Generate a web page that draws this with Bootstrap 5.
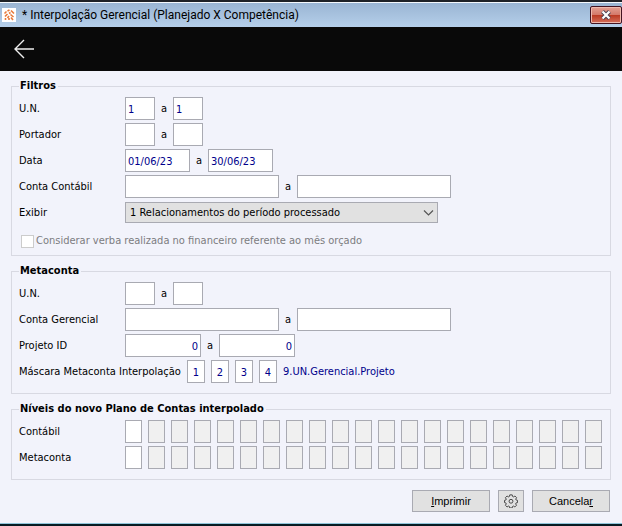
<!DOCTYPE html>
<html lang="pt-BR">
<head>
<meta charset="utf-8">
<meta name="viewport" content="width=device-width, initial-scale=1">
<title>Interpolação Gerencial</title>
<link href="https://cdn.jsdelivr.net/npm/bootstrap@5.3.0/dist/css/bootstrap.min.css" rel="stylesheet">
<style>
body{font-family:"DejaVu Sans Condensed","Noto Sans",sans-serif;font-size:11px;line-height:14px;color:#000;background:#f2f3fb}
.window{border-top:2px solid #1e2126;border-bottom:2px solid #061b22}
.inner{border-top:1px solid #f4f8fc;border-bottom:1px solid #8fc3d8}
.titlebar{height:24px;gap:6px;background:linear-gradient(#9ab5d3,#b5cfea);padding-left:2px}
.titlebar h1{font-family:Roboto,sans-serif;font-size:12px;line-height:16px}
.appicon{width:14px;height:14px;background:#fff}
.closebtn{width:32px;height:18px;border:1px solid #431422;border-radius:2px;background:linear-gradient(#e3a093,#d4796a 48%,#bb3a23 52%,#d4705c);box-shadow:inset 0 0 0 1px #eeb9ae}
.toolbar{height:44px;background:#090909;padding-left:14px}
.content{padding:8px 11px 11px}
.group{border:1px solid #d8d9e2;padding:4px 8px 7px 7px}
.group legend{font-size:11px;line-height:14px;font-weight:700;padding:0 2px 0 1px}
.line{min-height:23px;margin-bottom:3px}
.line label,.sep,.navy{line-height:14px;padding-top:1px}
.cap{width:106px}
.cap-long{width:162px}
.field{height:23px;border:1px solid #a9aab2;border-radius:0;background:#fff;color:#00008b;font-size:11px;line-height:14px;padding:1px 2px 0}
.field:disabled{background:#f0f0f0}
.w-s{width:30px}
.w-date{width:65px}
.w-acc{width:154px}
.w-id{width:76px}
.w-c{width:18px}
.sep{width:18px}
.pick{width:313px;height:21px;background-color:#e1e1e1;background-position:right 3px center;background-size:11px 11px;border:1px solid #a9aab2;font-size:11px;line-height:14px;padding:0 20px 0 4px;color:#000;background-image:url("data:image/svg+xml,%3csvg xmlns='http://www.w3.org/2000/svg' viewBox='0 0 11 11'%3e%3cpath fill='none' stroke='%23555' stroke-width='1.200' d='M1 3.500l4.500 4.500L10 3.500'/%3e%3c/svg%3e")}
.tick{width:13px;height:13px;border:1px solid #ccc;background:#fff}
.mask{gap:6px}
.check{min-height:21px;padding-left:2px;gap:2px;color:#7c7c80}
.navy{color:#00008b}
.cells{gap:6px}
.cell{min-width:0}
.cmds{gap:8px;margin-top:10px;padding-right:1px}
.cmd{height:22px;border:1px solid #a9aab2;border-radius:0;background:#e1e1e1;color:#000;font-family:"Liberation Sans",sans-serif;font-size:11px;line-height:14px;width:78px}
.cmd-icon{width:26px}
</style>
</head>
<body>
<div class="window"><div class="inner">
<header>
<div class="titlebar d-flex align-items-center">
<svg class="appicon" viewBox="0 0 14 14" aria-hidden="true"><path d="M2.500 5.500l2-2M5.500 3l2-1M9 2.500l3 3M3 8.500l2.500-2.500M7 5.500l1.500-1M8.500 6.500l3 2.500M3.500 12v-2M5.500 10l1.500-2M7 12v-2M9 9.500l2 2.500" stroke="#e87a3c" stroke-width="1.600" fill="none"/></svg>
<h1 class="m-0 fw-normal">* Interpolação Gerencial (Planejado X Competência)</h1>
<button type="button" class="closebtn ms-auto p-0 d-flex align-items-center justify-content-center" aria-label="Fechar"><svg width="12" height="10" viewBox="0 0 12 10"><path d="M2.500 1.500l7 7M9.500 1.500l-7 7" stroke="#4a4455" stroke-width="4"/><path d="M2.500 1.500l7 7M9.500 1.500l-7 7" stroke="#fff" stroke-width="2.200"/></svg></button>
</div>
<div class="toolbar d-flex align-items-center">
<button type="button" class="btn p-0 border-0 d-flex" aria-label="Voltar"><svg width="20" height="20" viewBox="0 0 20 20" fill="none" stroke="#eee" stroke-width="1.400"><path d="M20 10H1M10 1L1 10l9 9"/></svg></button>
</div>
</header>
<form class="content">
<fieldset class="group mb-2">
<legend class="float-none w-auto mb-0">Filtros</legend>
<div class="line d-flex align-items-center"><label class="cap" for="un1">U.N.</label><input class="field w-s" id="un1" value="1"><span class="sep text-center">a</span><input class="field w-s" value="1" aria-label="U.N. final"></div>
<div class="line d-flex align-items-center"><label class="cap" for="po1">Portador</label><input class="field w-s" id="po1"><span class="sep text-center">a</span><input class="field w-s" aria-label="Portador final"></div>
<div class="line d-flex align-items-center"><label class="cap" for="da1">Data</label><input class="field w-date" id="da1" value="01/06/23"><span class="sep text-center">a</span><input class="field w-date" value="30/06/23" aria-label="Data final"></div>
<div class="line d-flex align-items-center"><label class="cap" for="cc1">Conta Contábil</label><input class="field w-acc" id="cc1"><span class="sep text-center">a</span><input class="field w-acc" aria-label="Conta Contábil final"></div>
<div class="line d-flex align-items-center"><label class="cap" for="ex">Exibir</label><select class="form-select pick rounded-0" id="ex"><option>1 Relacionamentos do período processado</option></select></div>
<div class="check d-flex align-items-end"><input type="checkbox" class="tick form-check-input m-0 rounded-0 opacity-100" id="cv" disabled><label class="opacity-100" for="cv">Considerar verba realizada no financeiro referente ao mês orçado</label></div>
</fieldset>
<fieldset class="group mb-2">
<legend class="float-none w-auto mb-0">Metaconta</legend>
<div class="line d-flex align-items-center"><label class="cap" for="mu1">U.N.</label><input class="field w-s" id="mu1"><span class="sep text-center">a</span><input class="field w-s" aria-label="U.N. final"></div>
<div class="line d-flex align-items-center"><label class="cap" for="cg1">Conta Gerencial</label><input class="field w-acc" id="cg1"><span class="sep text-center">a</span><input class="field w-acc" aria-label="Conta Gerencial final"></div>
<div class="line d-flex align-items-center"><label class="cap" for="pj1">Projeto ID</label><input class="field w-id text-end" id="pj1" value="0"><span class="sep text-center">a</span><input class="field w-id text-end" value="0" aria-label="Projeto ID final"></div>
<div class="line mask d-flex align-items-center"><label class="cap-long text-nowrap" for="m1">Máscara Metaconta Interpolação</label><input class="field w-c text-center" id="m1" value="1"><input class="field w-c text-center" value="2" aria-label="Máscara 2"><input class="field w-c text-center" value="3" aria-label="Máscara 3"><input class="field w-c text-center" value="4" aria-label="Máscara 4"><span class="navy">9.UN.Gerencial.Projeto</span></div>
</fieldset>
<fieldset class="group">
<legend class="float-none w-auto mb-0">Níveis do novo Plano de Contas interpolado</legend>
<div class="line d-flex align-items-center"><label class="cap flex-shrink-0" for="n1">Contábil</label><div class="cells d-flex flex-fill" id="r1"><input class="field cell w-100" id="n1"></div></div>
<div class="line d-flex align-items-center"><label class="cap flex-shrink-0" for="n2">Metaconta</label><div class="cells d-flex flex-fill" id="r2"><input class="field cell w-100" id="n2"></div></div>
</fieldset>
<div class="cmds d-flex justify-content-end">
<button type="button" class="cmd p-0"><u>I</u>mprimir</button>
<button type="button" class="cmd cmd-icon p-0 d-flex align-items-center justify-content-center" aria-label="Configurar"><svg width="14" height="14" viewBox="0 0 16 16" fill="none" stroke="#444" stroke-width="1.100" stroke-linejoin="round"><path d="M6.600 1h2.800l.4 1.800 1.100.5 1.600-1 1.900 1.900-1 1.600.5 1.100 1.600.4v2.500l-1.700.4-.5 1.100 1 1.600-1.900 1.900-1.600-1-1.100.5-.4 1.700H6.600l-.4-1.700-1.100-.5-1.600 1-1.900-1.900 1-1.600-.5-1.100L.6 9.800V7.300l1.500-.4.5-1.100-1-1.600 1.900-1.900 1.600 1 1.100-.5z"/><circle cx="8" cy="8.300" r="2.200"/></svg></button>
<button type="button" class="cmd p-0">Cancela<u>r</u></button>
</div>
</form>
</div></div>
<script>
for (const id of ["r1", "r2"]) {
  const row = document.getElementById(id);
  for (let i = 2; i <= 21; i++) {
    const box = document.createElement("input");
    box.className = "field cell w-100";
    box.disabled = true;
    box.setAttribute("aria-label", "Nível " + i);
    row.append(box);
  }
}
</script>
<script src="https://cdn.jsdelivr.net/npm/bootstrap@5.3.0/dist/js/bootstrap.bundle.min.js"></script>
</body>
</html>
